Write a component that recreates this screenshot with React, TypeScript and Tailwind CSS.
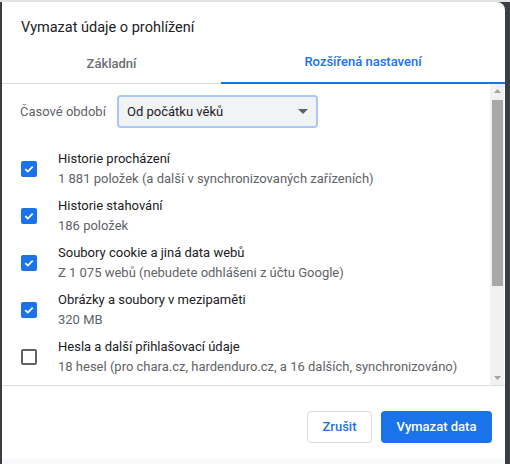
import React from 'react';

type Item = {
    title: string;
    detail: string;
    checked: boolean;
};

const items: Item[] = [
    {title: 'Historie procházení', detail: '1 881 položek (a další v synchronizovaných zařízeních)', checked: true},
    {title: 'Historie stahování', detail: '186 položek', checked: true},
    {title: 'Soubory cookie a jiná data webů', detail: 'Z 1 075 webů (nebudete odhlášeni z účtu Google)', checked: true},
    {title: 'Obrázky a soubory v mezipaměti', detail: '320 MB', checked: true},
    {title: 'Hesla a další přihlašovací údaje', detail: '18 hesel (pro chara.cz, hardenduro.cz, a 16 dalších, synchronizováno)', checked: false},
];

const Checkbox: React.FC<{checked: boolean}> = ({checked}) =>
    checked ? (
        <div className="w-4 h-4 rounded-[2px] bg-[#1a73e8] flex items-center justify-center shrink-0">
            <svg width="12" height="12" viewBox="0 0 12 12">
                <path d="M2.3 6.2 L4.8 8.6 L9.7 3.6" fill="none" stroke="white" strokeWidth="1.8"/>
            </svg>
        </div>
    ) : (
        <div className="w-4 h-4 rounded-[2px] border-2 border-[#5f6368] shrink-0"/>
    );

const App: React.FC = () => {
    return (
        <div className="w-[510px] h-[464px] bg-[#3a3d42] flex flex-col overflow-hidden"
             style={{fontFamily: 'Roboto, "Noto Sans", sans-serif'}}>
            <div className="h-[2px] bg-[#e3e3e3] shrink-0"/>
            <div className="flex flex-1 min-h-0">
                <div className="w-[2px] shrink-0"/>
                <div className="w-[503px] bg-white rounded-tr-[8px] flex flex-col">
                    <h1 className="text-[14.5px] text-[#202124] pl-[19px] pt-[15px] h-[42px] leading-[22px]">
                        Vymazat údaje o prohlížení
                    </h1>

                    <div className="flex border-b border-[#dadce0] h-[40px] text-[13px] font-medium">
                        <div className="w-[219px] flex items-center justify-center text-[#6b6e72]">Základní</div>
                        <div className="flex-1 flex items-center justify-center text-[#1a73e8] border-b-2 border-[#1a73e8] -mb-px pb-[2px]">
                            Rozšířená nastavení
                        </div>
                    </div>

                    <div className="flex h-[302px] border-b border-[#dadce0]">
                        <div className="flex-1 flex flex-col">
                            <div className="flex items-center pl-[18px] pt-[11px]">
                                <span className="text-[13px] text-[#5f6368] w-[97px]">Časové období</span>
                                <div className="w-[201px] h-[33px] rounded-[4px] bg-[#f1f3f4] border-2 border-[#a8c7fa] flex items-center justify-between pl-[8px] pr-[8px]">
                                    <span className="text-[13px] text-[#202124]">Od počátku věků</span>
                                    <svg width="10" height="5" viewBox="0 0 10 5">
                                        <path d="M0 0 L10 0 L5 5 Z" fill="#5f6368"/>
                                    </svg>
                                </div>
                            </div>

                            <div className="flex flex-col pt-[17px]">
                                {items.map((item) => (
                                    <div key={item.title} className="flex items-center h-[47px] pl-[19px]">
                                        <Checkbox checked={item.checked}/>
                                        <div className="flex flex-col ml-[21px] text-[13px] leading-[20px]">
                                            <span className="text-[#202124]">{item.title}</span>
                                            <span className="text-[#5f6368] whitespace-nowrap">{item.detail}</span>
                                        </div>
                                    </div>
                                ))}
                            </div>
                        </div>

                        <div className="w-[14px] bg-[#f1f1f1] flex flex-col items-center mr-[1px]">
                            <div className="h-[14px] flex items-center justify-center">
                                <svg width="7" height="4" viewBox="0 0 7 4">
                                    <path d="M0 4 L7 4 L3.5 0 Z" fill="#a3a3a3"/>
                                </svg>
                            </div>
                            <div className="w-[11px] h-[186px] bg-[#a8a8a8] mt-[2px]"/>
                            <div className="flex-1"/>
                            <div className="h-[14px] flex items-center justify-center">
                                <svg width="7" height="4" viewBox="0 0 7 4">
                                    <path d="M0 0 L7 0 L3.5 4 Z" fill="#a3a3a3"/>
                                </svg>
                            </div>
                        </div>
                    </div>

                    <div className="flex justify-end gap-[9px] pr-[13px] pt-[25px] flex-1">
                        <button className="w-[65px] h-[32px] rounded-[4px] border border-[#dadce0] bg-white text-[13px] font-medium text-[#1a73e8]">
                            Zrušit
                        </button>
                        <button className="w-[111px] h-[32px] rounded-[4px] bg-[#1a73e8] text-[13px] font-medium text-white">
                            Vymazat data
                        </button>
                    </div>
                    <div className="h-[5px] bg-[#f8f9fa] shrink-0"/>
                </div>
                <div className="flex-1"/>
            </div>
        </div>
    );
};

export default App;
